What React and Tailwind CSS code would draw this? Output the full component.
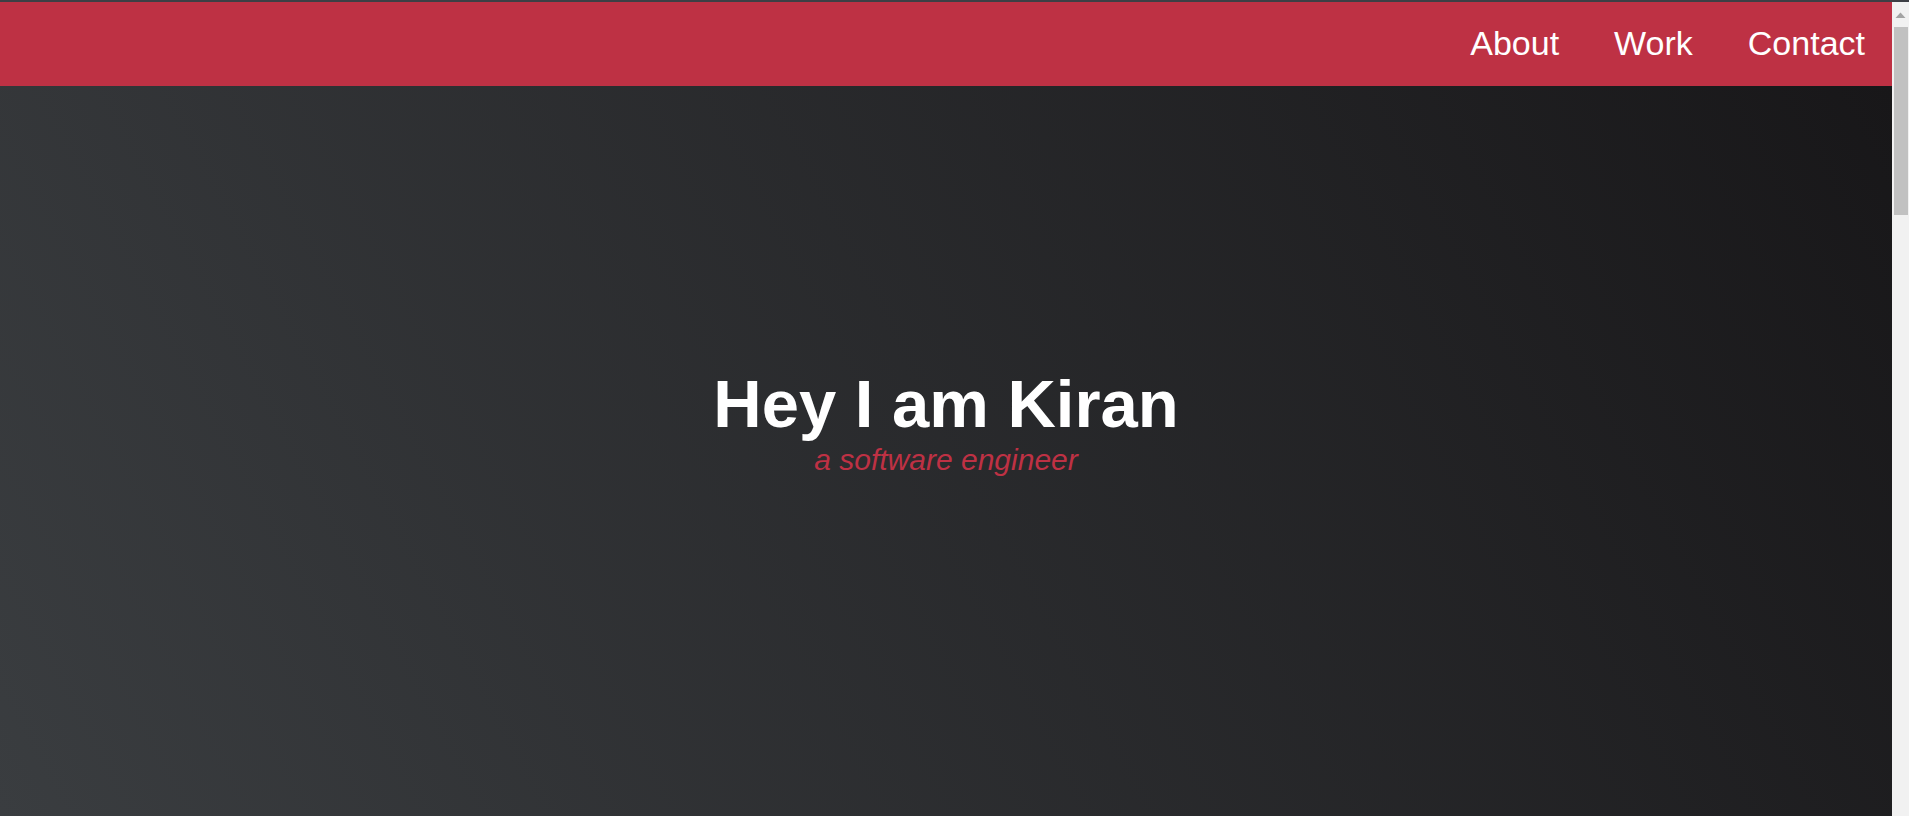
export default function App() {
  const links = ["About", "Work", "Contact"];
  return (
    <div className="flex h-screen flex-col overflow-hidden font-['Liberation_Sans',Arial,sans-serif]">
      <div className="h-[2px] shrink-0 bg-[#3d3f45]" />
      <div className="flex min-h-0 flex-1">
        <div className="flex min-w-0 flex-1 flex-col">
          <nav className="flex h-[84px] shrink-0 items-center justify-end gap-[55px] bg-[#be3144] pb-[2px] pr-[27px]">
            {links.map((l) => (
              <a key={l} href={`#${l.toLowerCase()}`} className="text-[34px] leading-none text-white">
                {l}
              </a>
            ))}
          </nav>
          <section className="flex flex-1 flex-col items-center bg-[linear-gradient(62deg,#3a3d40_0%,#181719_100%)] pt-[280px]">
            <h1 className="text-[67px] font-bold leading-[76px] text-white">Hey I am Kiran</h1>
            <p className="mt-[2px] text-[30px] italic leading-[32px] text-[#be3144]">a software engineer</p>
          </section>
        </div>
        <div className="flex w-[17px] shrink-0 flex-col items-center bg-[#f1f1f1]">
          <svg width="17" height="25" viewBox="0 0 17 25" className="shrink-0">
            <path d="M3.5 16 L8.5 10.5 L13.5 16 Z" fill="#a3a3a3" />
          </svg>
          <div className="h-[188px] w-[14px] bg-[#c1c1c1]" />
        </div>
      </div>
    </div>
  );
}
